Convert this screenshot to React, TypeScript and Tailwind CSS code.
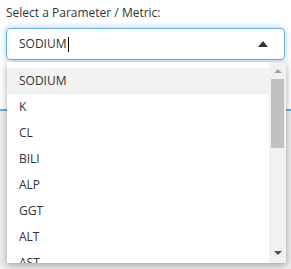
import { useState } from "react";

const OPTIONS = ["SODIUM", "K", "CL", "BILI", "ALP", "GGT", "ALT", "AST", "ALB", "TP"];

export default function App() {
  const [value] = useState("SODIUM");

  return (
    <div className="relative w-[291px] h-[269px] overflow-hidden bg-white font-['Open_Sans',sans-serif] text-[#333]">
      <div className="px-[6px] pt-[5px]">
        <label className="block text-[12px] leading-[16px]">Select a Parameter / Metric:</label>
        <div className="mt-[7px] flex h-[32px] items-center rounded-[4px] border border-[#66afe9] pl-[12px] pr-[16px] shadow-[0_0_6px_rgba(102,175,233,0.6)]">
          <span className="text-[12px] leading-none text-[#333]">{value}</span>
          <span className="ml-px h-[15px] w-px bg-black" />
          <span className="ml-auto h-0 w-0 border-x-[5px] border-b-[6px] border-x-transparent border-b-[#333]" />
        </div>
      </div>

      {/* page content behind the open list */}
      <div className="mt-[49px] h-[1px] border-b-2 border-[#5ab4dc]" />
      <div className="h-full bg-[#eeeeee]" />

      <div className="absolute left-[7px] top-[62px] flex h-[201px] w-[279px] overflow-hidden bg-white shadow-[0_2px_7px_rgba(0,0,0,0.35)]">
        <ul className="flex-1 overflow-hidden pt-[6px]">
          {OPTIONS.map((o) => (
            <li
              key={o}
              className={`flex h-[26px] items-center pl-[12px] text-[12px] ${o === value ? "bg-[#f2f2f2]" : ""}`}
            >
              {o}
            </li>
          ))}
        </ul>
        <div className="flex w-[17px] flex-col items-center bg-[#f1f1f1]">
          <span className="mt-[7px] h-0 w-0 border-x-[4px] border-b-[4px] border-x-transparent border-b-[#a3a3a3]" />
          <span className="mt-[6px] h-[69px] w-[13px] bg-[#c1c1c1]" />
          <span className="mt-auto mb-[8px] h-0 w-0 border-x-[4px] border-t-[4px] border-x-transparent border-t-[#505050]" />
        </div>
      </div>
    </div>
  );
}
